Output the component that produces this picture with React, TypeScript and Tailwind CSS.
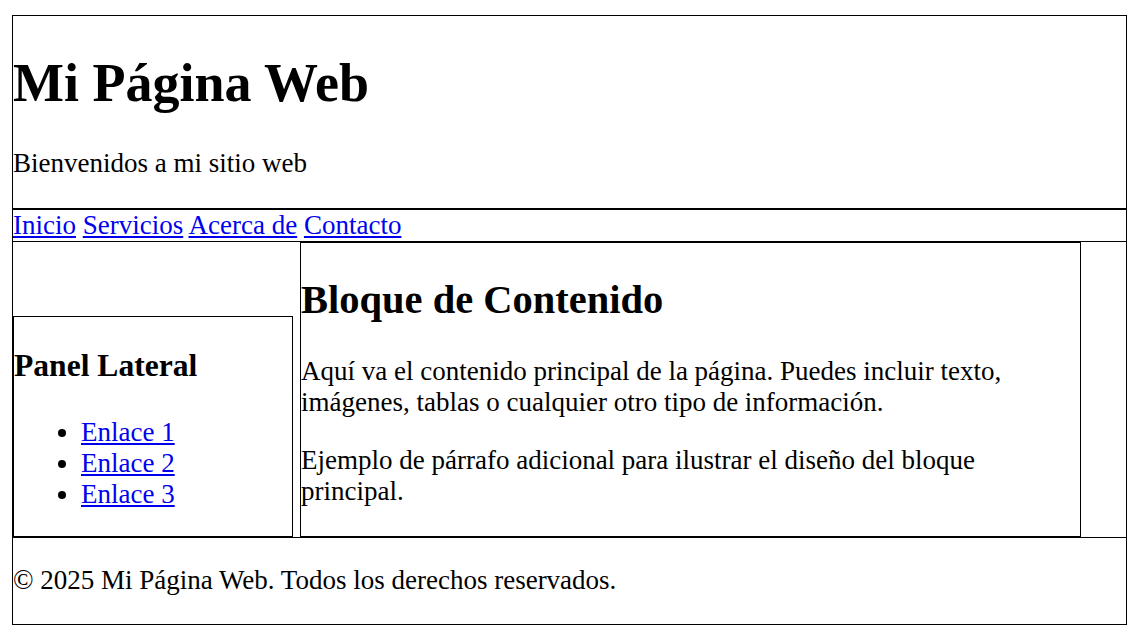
export default function App() {
  const links = ["Inicio", "Servicios", "Acerca de", "Contacto"];

  return (
    <div className="pt-[15px] pl-[12px] font-['Liberation_Serif',serif] text-[27px] text-black bg-white min-h-screen">
      <div className="w-[1115px] border border-black">
        <header className="border-b border-black">
          <h1 className="mt-[37px] text-[54px] leading-[61px] font-bold">Mi Página Web</h1>
          <p className="mt-[34px] mb-[29px] leading-[31px]">Bienvenidos a mi sitio web</p>
        </header>

        <nav className="border-t border-b border-black h-[33px] leading-[31px]">
          {links.map((l, i) => (
            <span key={l}>
              <a href="#" className="text-[#0000ee] underline">{l}</a>
              {i < links.length - 1 ? " " : ""}
            </span>
          ))}
        </nav>

        <main className="flex items-end gap-[7px]">
          <aside className="w-[280px] border border-black">
            <h3 className="mt-[31px] text-[31.6px] leading-[36px] font-bold">Panel Lateral</h3>
            <ul className="mt-[33px] mb-[26px] pl-[67px] list-disc leading-[31px]">
              <li><a href="#" className="text-[#0000ee] underline">Enlace 1</a></li>
              <li><a href="#" className="text-[#0000ee] underline">Enlace 2</a></li>
              <li><a href="#" className="text-[#0000ee] underline">Enlace 3</a></li>
            </ul>
          </aside>

          <section className="w-[781px] border border-black">
            <h2 className="mt-[34px] text-[40.5px] leading-[46px] font-bold">Bloque de Contenido</h2>
            <p className="mt-[33px] leading-[31px]">
              Aquí va el contenido principal de la página. Puedes incluir texto, imágenes, tablas o cualquier otro tipo de información.
            </p>
            <p className="mt-[27px] mb-[29px] leading-[31px]">
              Ejemplo de párrafo adicional para ilustrar el diseño del bloque principal.
            </p>
          </section>
        </main>

        <footer className="border-t border-black">
          <p className="mt-[27px] mb-[28px] leading-[31px]">© 2025 Mi Página Web. Todos los derechos reservados.</p>
        </footer>
      </div>
    </div>
  );
}
